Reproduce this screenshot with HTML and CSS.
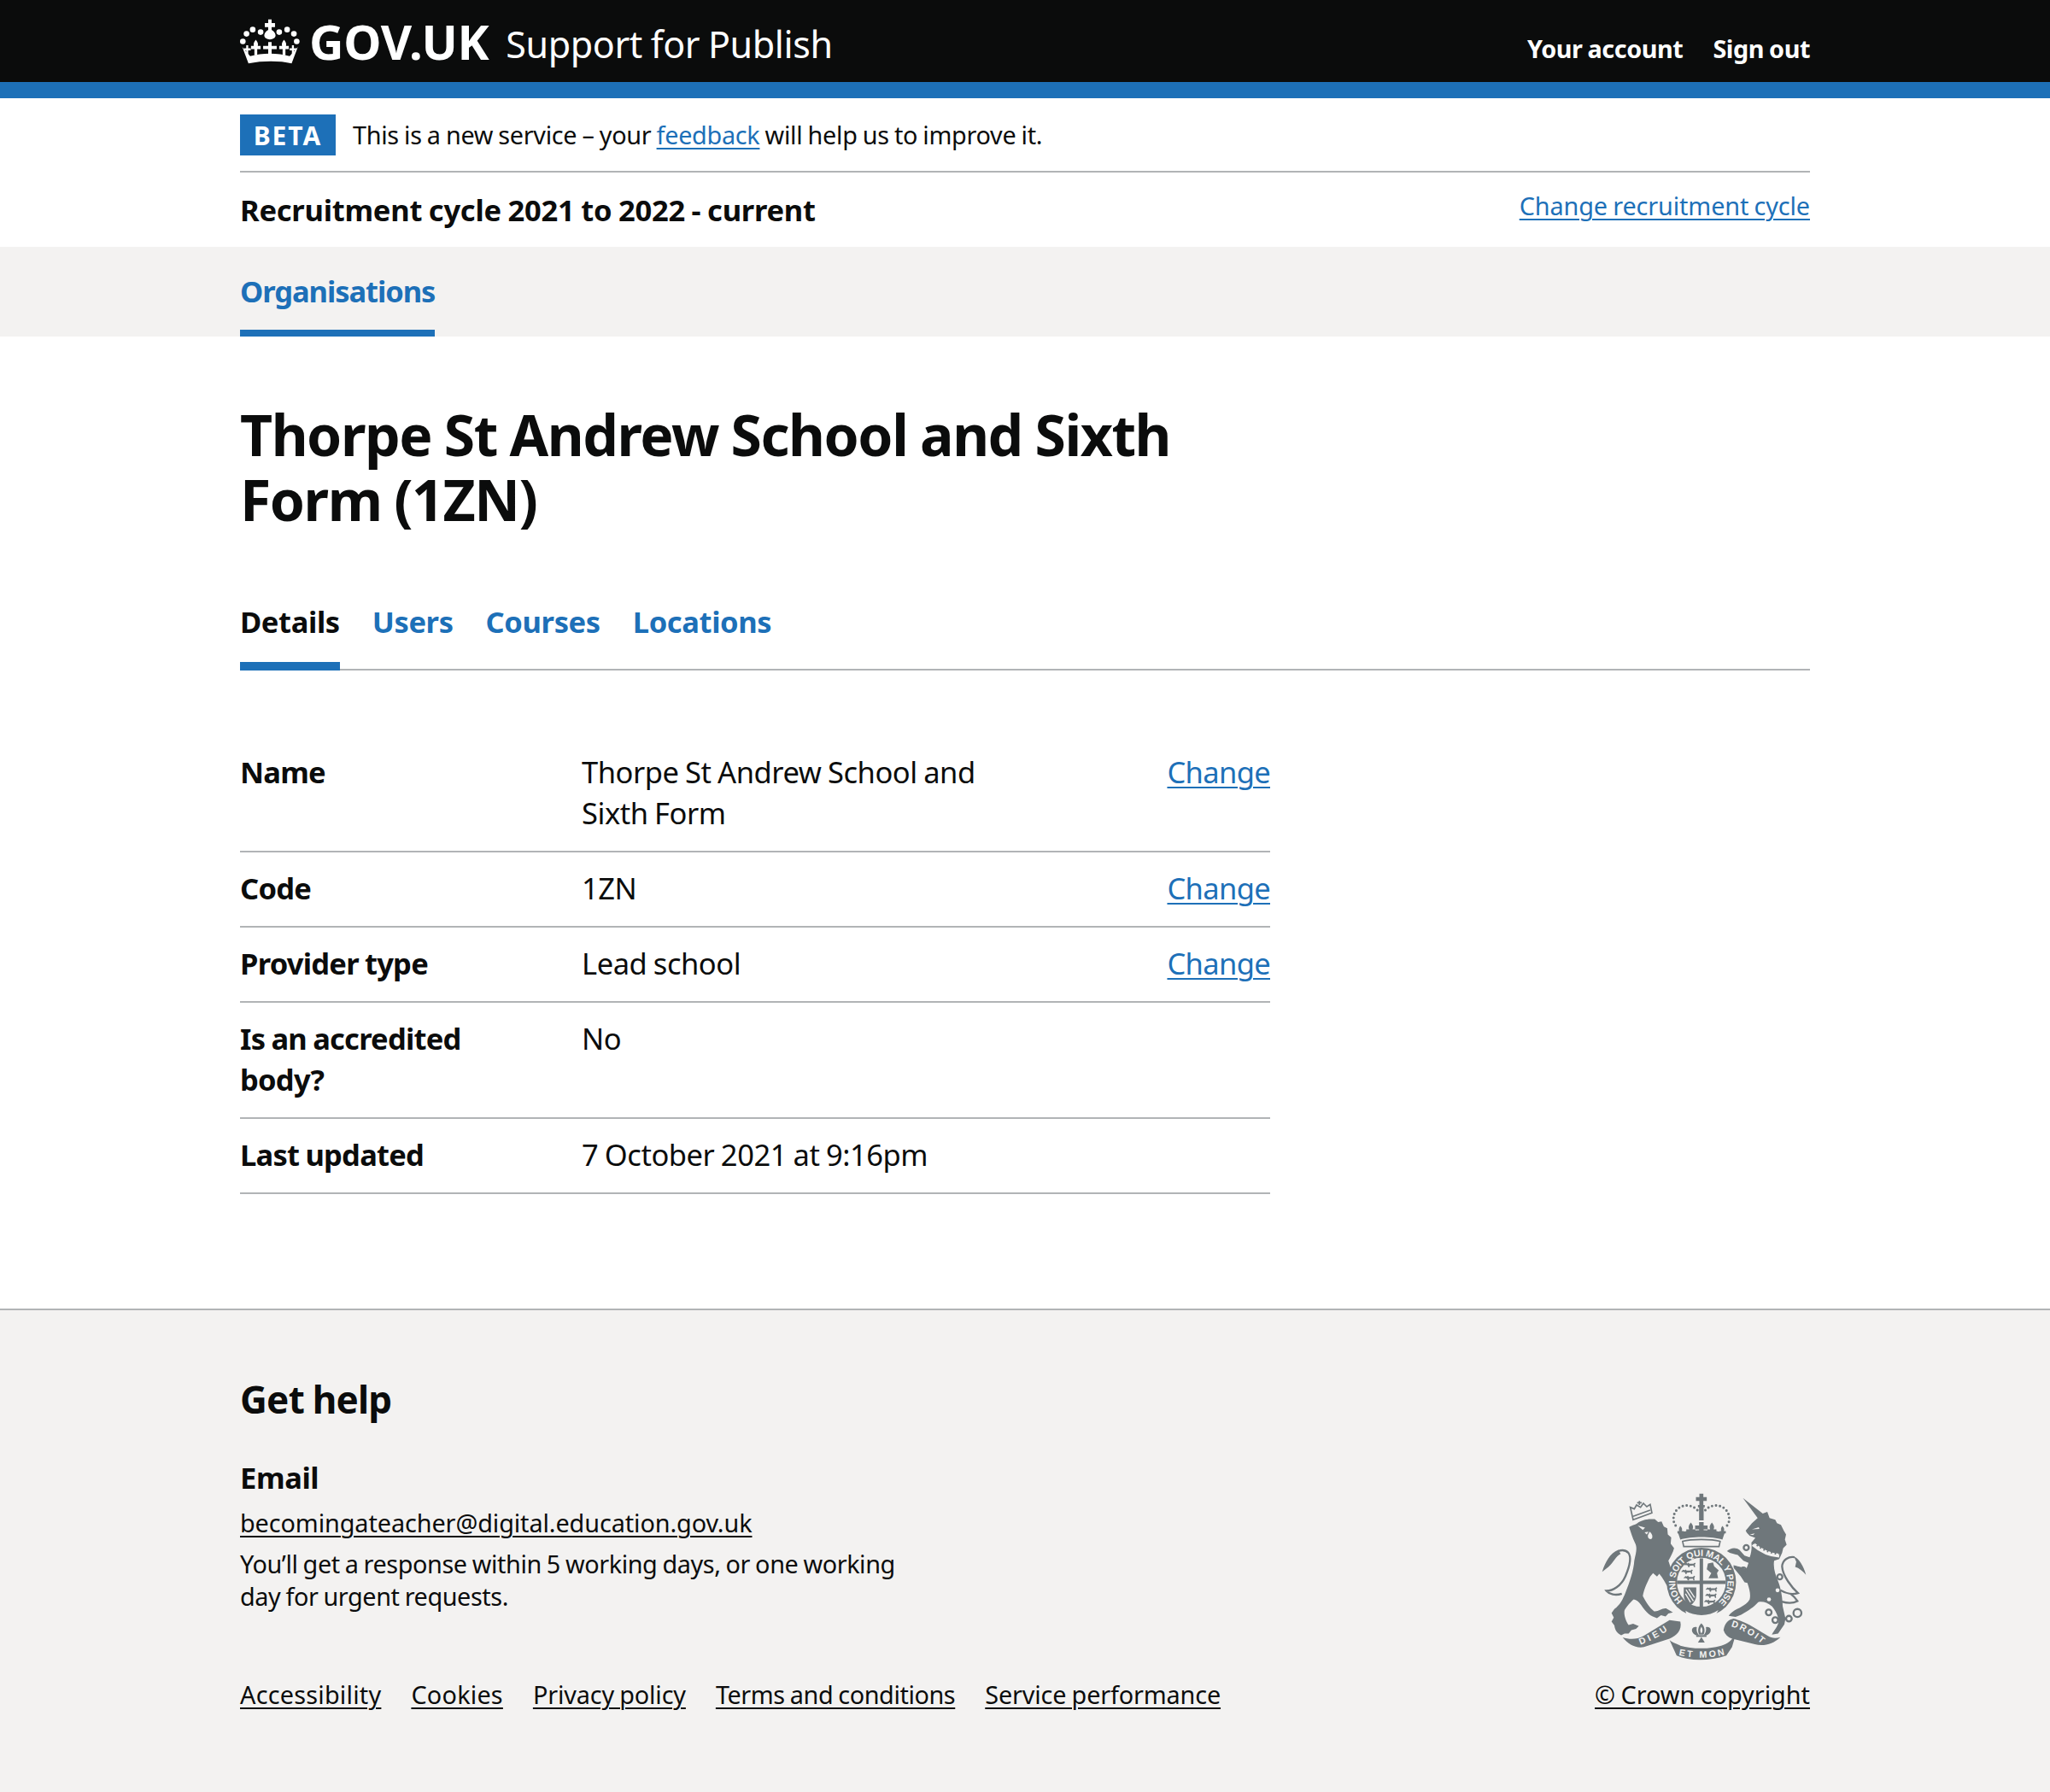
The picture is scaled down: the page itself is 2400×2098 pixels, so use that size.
FILE: index.html
```html
<!DOCTYPE html>
<html lang="en">
<head>
    <meta charset="UTF-8">
    <title>Thorpe St Andrew School and Sixth Form (1ZN)</title>
    <link rel="stylesheet" href="styles.css">
</head>
<body>
    <header class="site-header">
        <div class="width-container header-inner">
            <a class="logo" href="#">
                <svg class="crown" viewBox="12 18 212 160" aria-hidden="true">
                    <g fill="#fff">
                        <path d="M112 20h12v13h12v14h-12v10c10 6 14 14 14 20 0 8-9 14-20 14s-20-6-20-14c0-6 4-14 14-20V47h-12V33h12z"/>
                        <circle cx="85" cy="65" r="10"/><circle cx="151" cy="65" r="10"/>
                        <circle cx="57" cy="56" r="10"/><circle cx="179" cy="56" r="10"/>
                        <circle cx="35" cy="71" r="10"/><circle cx="203" cy="71" r="10"/>
                        <circle cx="22" cy="98" r="10"/><circle cx="213" cy="98" r="10"/>
                        <path d="M68 92c7 8 9 14 7 22h10v11H73v22H63v-22H51v-11h10c-2-8 0-14 7-22z"/>
                        <path d="M168 92c7 8 9 14 7 22h10v11h-12v22h-10v-22h-12v-11h10c-2-8 0-14 7-22z"/>
                        <path d="M112 100h12v14h18v11h-18v20h-12v-20H94v-11h18z"/>
                        <path d="M34 112h7v10h9v8h-9v18h-7v-18h-8v-8h8z"/>
                        <path d="M196 112h7v10h9v8h-9v18h-7v-18h-8v-8h8z"/>
                        <path d="M20 118l28 32c42-12 98-12 140 0l29-32-22 58c-42-10-103-10-153 0z"/>
                    </g>
                </svg>
                <span class="logo-text">GOV.UK</span>
            </a>
            <a class="service-name" href="#">Support for Publish</a>
            <nav class="header-nav">
                <a href="#">Your account</a>
                <a href="#">Sign out</a>
            </nav>
        </div>
    </header>
    <div class="header-stripe"></div>

    <div class="width-container">
        <div class="phase-banner">
            <strong class="phase-tag">BETA</strong>
            <span>This is a new service – your <a class="link" href="#">feedback</a> will help us to improve it.</span>
        </div>
        <div class="cycle-bar">
            <strong class="cycle-title">Recruitment cycle 2021 to 2022 - current</strong>
            <a class="link cycle-link" href="#">Change recruitment cycle</a>
        </div>
    </div>

    <div class="primary-nav">
        <div class="width-container">
            <a class="primary-nav-item" href="#">Organisations</a>
        </div>
    </div>

    <main class="width-container main">
        <h1 class="page-title">Thorpe St Andrew School and Sixth<br>Form (1ZN)</h1>

        <nav class="tabs">
            <a class="tab tab-current" href="#">Details</a>
            <a class="tab" href="#">Users</a>
            <a class="tab" href="#">Courses</a>
            <a class="tab" href="#">Locations</a>
        </nav>

        <dl class="summary">
            <div class="summary-row">
                <dt>Name</dt>
                <dd>Thorpe St Andrew School and<br>Sixth Form</dd>
                <dd class="summary-action"><a class="link" href="#">Change</a></dd>
            </div>
            <div class="summary-row">
                <dt>Code</dt>
                <dd>1ZN</dd>
                <dd class="summary-action"><a class="link" href="#">Change</a></dd>
            </div>
            <div class="summary-row">
                <dt>Provider type</dt>
                <dd>Lead school</dd>
                <dd class="summary-action"><a class="link" href="#">Change</a></dd>
            </div>
            <div class="summary-row">
                <dt>Is an accredited<br>body?</dt>
                <dd>No</dd>
                <dd class="summary-action"></dd>
            </div>
            <div class="summary-row">
                <dt>Last updated</dt>
                <dd>7 October 2021 at 9:16pm</dd>
                <dd class="summary-action"></dd>
            </div>
        </dl>
    </main>

    <footer class="footer">
        <div class="width-container footer-inner">
            <div class="footer-left">
                <h2 class="footer-title">Get help</h2>
                <h3 class="footer-subtitle">Email</h3>
                <a class="footer-link footer-email" href="#">becomingateacher@digital.education.gov.uk</a>
                <p class="footer-note">You’ll get a response within 5 working days, or one working<br>day for urgent requests.</p>
                <ul class="footer-links">
                    <li><a class="footer-link" href="#">Accessibility</a></li>
                    <li><a class="footer-link" href="#">Cookies</a></li>
                    <li><a class="footer-link" href="#">Privacy policy</a></li>
                    <li><a class="footer-link" href="#">Terms and conditions</a></li>
                    <li><a class="footer-link" href="#">Service performance</a></li>
                </ul>
            </div>
            <div class="footer-right">
                <svg class="crest" viewBox="95 55 730 595" aria-hidden="true">
                    <defs>
                        <path id="garter" d="M387 437A92 92 0 1 1 517 437"/>
                        <path id="ribbon-left" d="M238 592C270 580 312 560 346 532"/>
                        <path id="ribbon-mid" d="M372 628C420 640 490 640 536 626"/>
                        <path id="ribbon-right" d="M556 527C590 535 640 565 668 592"/>
                        <path id="passant" d="M0 8l6-6 5 2 4-3 3 4 14 0 5-4 3 3-3 4 1 9h-4l-2-6-13 1-1 5h-4l-2-6-6-2-6 1z"/>
                    </defs>

                    <!-- royal crown -->
                    <g class="crest-fill">
                        <path d="M445 60h14v12h12v14h-12v14h-14V86h-12V72h12z"/>
                        <path d="M440 100h24v8h-4v46h-16v-46h-4z"/>
                        <path d="M444 160h16v12h14v14h-14v16h-16v-16h-14v-14h14z"/>
                        <path d="M415 162c8 10 10 16 6 24h10v10h-32v-10h10c-4-8-2-14 6-24z"/>
                        <path d="M489 162c8 10 10 16 6 24h10v10h-32v-10h10c-4-8-2-14 6-24z"/>
                        <path d="M378 174c6 6 8 12 5 18h7v8h-22v-8h6c-2-6-1-12 4-18z"/>
                        <path d="M526 174c6 6 8 12 5 18h7v8h-22v-8h6c-2-6-1-12 4-18z"/>
                        <path d="M370 198C410 186 495 186 534 198L526 222C490 210 415 210 378 222z"/>
                    </g>
                    <g class="crest-lines">
                        <path class="crest-dotted" d="M438 118c-30-32-84-14-84 30 0 18 8 26 16 32"/>
                        <path class="crest-dotted" d="M466 118c30-32 84-14 84 30 0 18-8 26-16 32"/>
                        <path class="crest-thin" d="M386 228c30-9 102-9 132 0l-4 18h-124z"/>
                    </g>

                    <!-- lion -->
                    <path class="crest-fill" d="M198 178C208 170 222 170 232 160C250 150 270 148 288 150L300 160L312 158L320 176L332 182L334 204L346 214L344 236L356 252C352 268 344 282 336 296L344 320C352 340 362 362 364 382L358 392L362 404L346 410L336 392C326 376 316 356 304 342L296 352L282 340L272 352C262 372 250 396 246 420C256 440 270 462 286 474C300 476 314 462 328 464L352 478L336 482L326 492L310 488L296 498C276 494 256 478 240 452C232 440 224 434 214 432C204 440 190 456 182 470C178 484 186 508 196 522L212 518L232 526L222 536L206 540L196 552L182 552L170 558C156 552 148 540 146 524L136 510L144 496L136 480L146 466C166 452 176 432 186 406C200 370 214 330 216 296C222 268 228 250 218 232C210 216 204 196 198 178Z"/>
                    <path class="crest-fill" d="M103 335C115 300 130 270 160 258L168 272C150 280 145 300 125 318z"/>
                    <g class="crest-lines">
                        <path d="M172 412C150 420 128 414 118 402C140 402 170 385 185 350C200 315 208 285 195 268C185 258 172 258 160 262"/>
                        <path class="crest-thin" d="M212 152l66-24-6-30-12 8-12-12-10 14-14-8-8 14-14-6z"/>
                        <path class="crest-thin" d="M212 140l60-22"/>
                        <path class="crest-thin" d="M234 100V86M226 92h16"/>
                    </g>
                    <g class="crest-spots">
                        <path d="M228 172l26 8-8 8z"/>
                        <path d="M270 194c8 6 12 16 8 24-8 6-16-2-14-12z"/>
                        <path d="M252 196l14-2-6 10z"/>
                    </g>

                    <!-- unicorn -->
                    <path class="crest-fill" d="M598 75L668 130L684 124L692 146L712 152L718 164L732 170L742 190L750 204L746 222L752 240L740 252L736 268L726 290L708 296C704 320 712 345 722 368C732 392 738 430 738 456L748 500L744 520L722 552L700 556C708 540 722 528 724 508C722 488 712 470 700 456C684 444 668 438 652 442C640 456 616 474 592 486L572 494L548 490C556 478 570 468 586 462C604 452 616 444 622 432C626 416 622 398 614 374L604 372L590 350L566 322L565 312L590 318L610 326L618 304L600 296L580 276L552 268L542 262C556 250 572 248 586 258L604 278L622 284C628 268 630 250 628 232L642 216L622 208L612 198L608 190L630 164L650 146Z"/>
                    <g class="crest-lines">
                        <path d="M730 400C750 412 775 416 792 410C770 390 738 350 736 316C738 292 760 280 780 284"/>
                        <path d="M735 440C755 446 775 446 790 438C784 428 776 420 766 412"/>
                        <circle cx="689" cy="478" r="10"/>
                        <circle cx="712" cy="505" r="10"/>
                        <circle cx="760" cy="500" r="10"/>
                        <circle cx="790" cy="480" r="14"/>
                        <circle cx="610" cy="250" r="9"/>
                        <circle cx="600" cy="330" r="10"/>
                        <circle cx="728" cy="353" r="9"/>
                    </g>
                    <path class="crest-fill" d="M778 282C796 288 812 316 820 346C808 332 796 322 782 318L786 300z"/>
                    <path class="crest-collar" d="M634 238c28 24 60 38 92 40"/>
                    <path class="crest-collar-teeth" d="M636 232c28 24 58 38 90 40"/>
                    <g class="crest-spots">
                        <circle cx="690" cy="432" r="7"/><circle cx="720" cy="400" r="7"/>
                        <path d="M630 186l24-8 2 6z"/>
                        <path d="M622 204l18-4-6 6z"/>
                    </g>

                    <!-- garter and shield -->
                    <circle class="crest-fill" cx="452" cy="372" r="122"/>
                    <circle class="crest-inner" cx="452" cy="372" r="86"/>
                    <path class="crest-inner" d="M396 472c30 20 82 22 116-2l-8 14c-30 20-76 20-104 2z"/>
                    <path class="crest-fill" d="M446 288h12v78h80v12h-80v92h-12v-92h-80v-12h80z"/>
                    <g class="crest-fill">
                        <use href="#passant" x="392" y="302"/>
                        <use href="#passant" x="382" y="326"/>
                        <use href="#passant" x="390" y="348"/>
                        <path d="M475 306l18-4 4 14 16 14-6 10 4 18h-34l10-18-16-14z"/>
                        <use href="#passant" x="468" y="388"/>
                        <use href="#passant" x="466" y="410"/>
                        <use href="#passant" x="462" y="432"/>
                        <path d="M390 390h44v26c0 18-10 30-22 38-12-8-22-20-22-38z"/>
                    </g>
                    <path class="crest-harp" d="M398 398l26 40M408 396l20 30M396 412l18 30"/>
                    <g class="crest-spots">
                        <circle cx="432" cy="492" r="6"/><circle cx="464" cy="500" r="6"/>
                    </g>

                    <!-- motto ribbon -->
                    <g class="crest-fill">
                        <path d="M175 566c25 8 50 8 75-6l90-55 38 5c7 30-13 50-38 60l-90 30c-30 5-55-10-75-34z"/>
                        <path d="M340 575c10 10 32 15 38 20 42 13 112 13 152-3 20-7 35-22 45-44l-15 52-20 30c-60 20-130 20-175 0z"/>
                        <path d="M530 540c5-25 15-35 35-40 45 10 95 45 120 60 15 10 30 10 45 5-25 25-60 33-90 25l-80-20c-15-5-25-15-30-30z"/>
                        <path d="M452 516c12 12 14 26 8 40h-16c-6-14-4-28 8-40z"/>
                        <path d="M436 530c-12-4-20 6-16 16 4 10 14 14 24 12-8-8-10-18-8-28z"/>
                        <path d="M468 530c12-4 20 6 16 16-4 10-14 14-24 12 8-8 10-18 8-28z"/>
                        <path d="M434 558h36v6h-36z"/>
                        <path d="M452 564l12 20h-24z"/>
                    </g>
                    <path class="crest-inner" d="M452 528c5 8 6 16 0 24-6-8-5-16 0-24z"/>

                    <g class="crest-text">
                        <text><textPath href="#garter" textLength="440" lengthAdjust="spacing">HONI SOIT QUI MAL Y PENSE</textPath></text>
                        <text><textPath href="#ribbon-left" textLength="108" lengthAdjust="spacing">DIEU</textPath></text>
                        <text><textPath href="#ribbon-mid" textLength="164" lengthAdjust="spacing">ET MON</textPath></text>
                        <text><textPath href="#ribbon-right" textLength="125" lengthAdjust="spacing">DROIT</textPath></text>
                    </g>
                </svg>
                <a class="footer-link" href="#">© Crown copyright</a>
            </div>
        </div>
    </footer>
</body>
</html>
```

FILE: styles.css
```css
* {
    box-sizing: border-box;
}
body {
    margin: 0;
    font-family: "Noto Sans", "Liberation Sans", sans-serif;
    font-size: 34.5px;
    line-height: 48px;
    letter-spacing: -0.013em;
    word-spacing: -0.03em;
    color: #0b0c0c;
    background-color: #fff;
}
.width-container {
    width: 1838px;
    margin: 0 auto;
}
.link {
    color: #1d70b8;
    text-decoration: underline;
    text-decoration-thickness: 2px;
    text-underline-offset: 4px;
}

/* header */
.site-header {
    background-color: #0b0c0c;
    height: 96px;
}
.header-inner {
    display: flex;
    align-items: flex-start;
    height: 96px;
}
.logo {
    display: flex;
    align-items: center;
    gap: 11px;
    color: #fff;
    text-decoration: none;
    margin-top: 20px;
}
.crown {
    width: 70px;
    height: 53px;
}
.logo-text {
    font-size: 56px;
    line-height: 56px;
    font-weight: 700;
    letter-spacing: -0.005em;
}
.service-name {
    color: #fff;
    text-decoration: none;
    font-size: 43px;
    line-height: 56px;
    letter-spacing: -0.009em;
    margin: 24px 0 0 20px;
}
.header-nav {
    margin-left: auto;
    display: flex;
    gap: 35px;
    padding-top: 36px;
}
.header-nav a {
    color: #fff;
    text-decoration: none;
    font-size: 28.8px;
    line-height: 42px;
    font-weight: 700;
    letter-spacing: -0.015em;
}
.header-stripe {
    height: 19px;
    background-color: #1d70b8;
}

/* phase banner and cycle */
.phase-banner {
    display: flex;
    align-items: center;
    gap: 20px;
    height: 87px;
    border-bottom: 2px solid #b1b4b6;
    font-size: 28.8px;
    line-height: 38px;
    letter-spacing: -0.01em;
}
.phase-tag {
    background-color: #1d70b8;
    color: #fff;
    width: 112px;
    height: 48px;
    line-height: 50px;
    text-align: center;
    letter-spacing: 2px;
    font-size: 30px;
}
.cycle-bar {
    display: flex;
    justify-content: space-between;
    align-items: flex-start;
    height: 87px;
}
.cycle-title {
    margin-top: 20px;
    letter-spacing: -0.007em;
}
.cycle-link {
    font-size: 28.8px;
    line-height: 38px;
    letter-spacing: -0.004em;
    margin-top: 20px;
}
.primary-nav {
    background-color: #f3f2f1;
    height: 105px;
}
.primary-nav-item {
    display: inline-block;
    height: 105px;
    padding-top: 28px;
    color: #1d70b8;
    font-weight: 700;
    letter-spacing: -0.031em;
    text-decoration: none;
    border-bottom: 8px solid #1d70b8;
}

/* main */
.main {
    padding-top: 76px;
}
.page-title {
    margin: 0;
    font-size: 66px;
    line-height: 76px;
    font-weight: 700;
    letter-spacing: -0.022em;
}
.tabs {
    display: flex;
    gap: 38px;
    margin-top: 82px;
    height: 81px;
    border-bottom: 2px solid #b1b4b6;
}
.tab {
    height: 81px;
    color: #1d70b8;
    font-weight: 700;
    letter-spacing: -0.011em;
    text-decoration: none;
}
.tab-current {
    color: #0b0c0c;
    border-bottom: 10px solid #1d70b8;
}
.summary {
    width: 1206px;
    margin: 77px 0 0;
}
.summary-row {
    display: grid;
    grid-template-columns: 400px 1fr auto;
    padding: 18px 0 20px;
    border-bottom: 2px solid #b1b4b6;
}
.summary-row dt {
    font-weight: 700;
    letter-spacing: -0.022em;
}
.summary-row dd {
    margin: 0;
}
.summary-action {
    letter-spacing: -0.019em;
}

/* footer */
.footer {
    margin-top: 134px;
    height: 566px;
    background-color: #f3f2f1;
    border-top: 2px solid #b1b4b6;
}
.footer-inner {
    display: flex;
    justify-content: space-between;
    align-items: flex-end;
    padding-bottom: 95px;
    height: 564px;
    font-size: 28.8px;
    line-height: 38px;
    letter-spacing: -0.005em;
}
.footer-title {
    margin: 0;
    font-size: 44px;
    line-height: 56px;
    letter-spacing: -0.017em;
}
.footer-subtitle {
    margin: 40px 0 0;
    font-size: 34.5px;
    line-height: 48px;
    letter-spacing: -0.012em;
}
.footer-link {
    color: #0b0c0c;
    text-decoration: underline;
    text-decoration-thickness: 2px;
    text-underline-offset: 4px;
}
.footer-email {
    display: block;
    margin-top: 10px;
    letter-spacing: -0.003em;
}
.footer-note {
    margin: 10px 0 0;
    letter-spacing: -0.014em;
}
.footer-links {
    list-style: none;
    display: flex;
    gap: 35px;
    margin: 77px 0 0;
    padding: 0;
    white-space: nowrap;
}
.footer-links li:nth-child(-n+2) {
    letter-spacing: 0.008em;
}
.footer-links li:nth-child(4) {
    letter-spacing: -0.014em;
}
.footer-right {
    display: flex;
    flex-direction: column;
    align-items: flex-end;
    gap: 20px;
    letter-spacing: 0;
}
.crest {
    width: 243px;
    height: 198px;
    margin-right: 3px;
}
.crest-fill {
    fill: #6f777b;
}
.crest-lines {
    fill: none;
    stroke: #6f777b;
    stroke-width: 7;
}
.crest-thin {
    stroke-width: 5;
}
.crest-dotted {
    stroke-width: 9;
    stroke-linecap: round;
    stroke-dasharray: 0 14;
}
.crest-collar {
    fill: none;
    stroke: #f3f2f1;
    stroke-width: 14;
}
.crest-collar-teeth {
    fill: none;
    stroke: #6f777b;
    stroke-width: 7;
    stroke-dasharray: 5 9;
}
.crest-harp {
    fill: none;
    stroke: #f3f2f1;
    stroke-width: 4;
}
.crest-inner {
    fill: #f3f2f1;
}
.crest-spots {
    fill: #f3f2f1;
}
.crest-text {
    fill: #f3f2f1;
    font-family: "Liberation Sans", sans-serif;
    font-size: 32px;
    font-weight: 700;
    letter-spacing: 0;
    word-spacing: 0;
}
```
